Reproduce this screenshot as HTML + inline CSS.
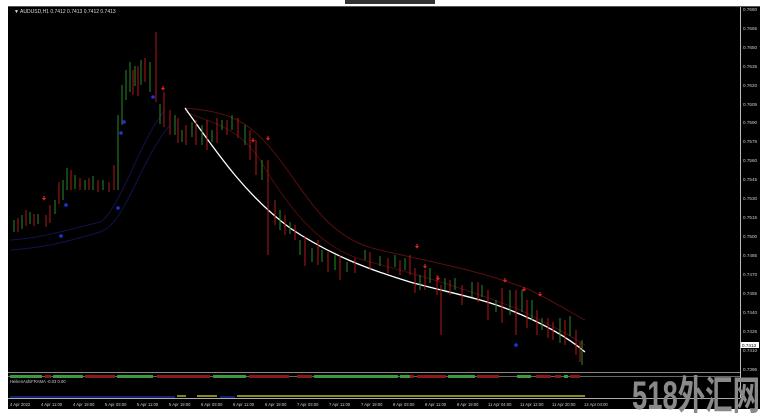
<!DOCTYPE html>
<html><head><meta charset="utf-8"><style>
html,body{margin:0;padding:0;background:#fff;width:766px;height:415px;overflow:hidden}
svg{display:block}
text{font-family:"Liberation Sans",sans-serif}
</style></head><body>
<svg width="766" height="415" xmlns="http://www.w3.org/2000/svg">
<defs><path id="ar" d="M-0.6 -3h1.2v2h1.6l-2.2 2.6l-2.2 -2.6h1.6z" fill="#e02020"/></defs>
<rect x="0" y="0" width="766" height="415" fill="#fff"/>
<rect x="345" y="0" width="90" height="4" fill="#333"/>
<rect x="8" y="6" width="752" height="403" fill="#000"/>
<line x1="8" y1="6.5" x2="760" y2="6.5" stroke="#555"/>
<line x1="740.5" y1="7" x2="740.5" y2="398" stroke="#bbb"/>
<line x1="8" y1="372.5" x2="740" y2="372.5" stroke="#888"/>
<line x1="8" y1="398.5" x2="740" y2="398.5" stroke="#aaa"/>
<text x="14" y="13" font-size="5" fill="#ddd">▼ AUDUSD,H1  0.7412 0.7413 0.7412 0.7413</text>
<g font-size="4.6" fill="#ccc">
<text x="743" y="11">0.7680</text><text x="743" y="30">0.7665</text><text x="743" y="49">0.7650</text><text x="743" y="68">0.7635</text><text x="743" y="87">0.7620</text><text x="743" y="106">0.7605</text><text x="743" y="124">0.7590</text><text x="743" y="143">0.7575</text><text x="743" y="162">0.7560</text><text x="743" y="181">0.7545</text><text x="743" y="200">0.7530</text><text x="743" y="219">0.7515</text><text x="743" y="238">0.7500</text><text x="743" y="257">0.7485</text><text x="743" y="276">0.7470</text><text x="743" y="295">0.7455</text><text x="743" y="314">0.7440</text><text x="743" y="333">0.7425</text><text x="743" y="352">0.7410</text><text x="743" y="371">0.7396</text>
</g>
<rect x="741" y="342" width="18" height="6" fill="#fff"/><text x="742" y="347" font-size="4.6" fill="#000">0.7413</text>
<g fill="none" stroke-width="1">
<path d="M10 240 C40 238 60 232 100 222 C120 210 140 140 165 110" stroke="#12124a"/>
<path d="M10 250 C40 248 60 244 100 232 C125 225 140 160 170 125" stroke="#12124a"/>
<path d="M185 108 C230 112 250 120 280 160 C310 200 330 240 380 250 C430 262 480 270 530 290 C560 305 575 315 585 320" stroke="#5a0e0e"/>
<path d="M185 112 C220 125 240 130 260 160 C290 210 320 250 370 262 C420 275 470 290 520 310 C550 325 570 335 585 345" stroke="#4a0c0c"/>
<path d="M185 108 C215 150 245 195 290 228 C330 255 370 270 410 282 C450 293 480 298 510 310 C540 322 565 335 585 352" stroke="#fff" stroke-width="1.3"/>
</g>
<g stroke-width="1">
<g stroke="#2a8a2a">
<path d="M14 220v12M22 215v14M30 212v12M38 214v10M55 200v14M63 180v20M67 168v22M75 175v14M85 180v10M93 176v14M103 180v10M118 115v75M122 85v40M126 70v30M130 62v30M135 66v20M141 60v25M150 62v30M160 104v20M175 115v20M182 130v12M192 122v15M202 125v20M212 130v12M222 120v10M232 115v15M245 125v20M262 160v20M280 210v20M290 222v12M300 240v15M312 248v14M322 250v12M335 255v15M347 262v10M365 250v10M380 256v10M395 255v12M405 258v12M420 275v15M430 268v15M445 278v12M455 278v12M472 282v15M482 285v12M496 300v12M510 290v25M522 290v22M532 300v20M542 318v12M560 318v25M570 316v20M582 340v25"/>
</g>
<g stroke="#b01818">
<path d="M18 218v14M26 210v16M34 214v12M46 215v12M50 205v18M59 182v22M71 170v20M80 178v12M89 178v12M98 180v12M109 182v10M114 165v25M133 70v25M138 66v30M145 58v24M156 32v70M164 92v35M170 110v25M178 118v25M186 125v20M196 120v25M207 120v30M217 118v25M227 120v15M238 118v20M250 130v30M256 140v35M268 160v95M275 200v25M285 215v20M295 225v15M305 236v30M318 240v25M328 252v20M340 255v25M355 258v15M370 252v18M388 258v15M400 260v15M410 255v20M415 268v25M425 270v20M437 275v20M441 285v50M450 280v15M462 285v20M478 282v20M488 290v30M502 288v35M516 290v45M527 300v28M537 310v25M548 318v20M553 322v18M565 320v25M576 330v25M580 342v20"/>
</g>
</g>
<use href="#ar" x="44" y="199"/><use href="#ar" x="163" y="89"/><use href="#ar" x="253" y="141"/><use href="#ar" x="268" y="139"/><use href="#ar" x="417" y="247"/><use href="#ar" x="425" y="267"/><use href="#ar" x="438" y="279"/><use href="#ar" x="505" y="281"/><use href="#ar" x="524" y="290"/><use href="#ar" x="540" y="295"/>
<g fill="#2233dd">
<circle cx="61" cy="236" r="1.8"/><circle cx="66" cy="205" r="1.8"/><circle cx="118" cy="208" r="1.8"/><circle cx="121" cy="133" r="1.8"/><circle cx="124" cy="122" r="1.8"/><circle cx="153" cy="97" r="1.8"/><circle cx="516" cy="345" r="1.8"/>
</g>
<line x1="8" y1="376.5" x2="740" y2="376.5" stroke="#666"/>
<g fill="#3a9a3a"><rect x="10" y="375" width="32" height="3"/><rect x="53" y="375" width="30" height="3"/><rect x="117" y="375" width="36" height="3"/><rect x="213" y="375" width="33" height="3"/><rect x="314" y="375" width="84" height="3"/><rect x="400" y="375" width="12" height="3"/><rect x="448" y="375" width="27" height="3"/><rect x="517" y="375" width="14" height="3"/><rect x="564" y="375" width="4" height="3"/></g>
<g fill="#8a1a1a"><rect x="45" y="375" width="6" height="3"/><rect x="85" y="375" width="30" height="3"/><rect x="157" y="375" width="53" height="3"/><rect x="249" y="375" width="40" height="3"/><rect x="297" y="375" width="15" height="3"/><rect x="410" y="375" width="4" height="3"/><rect x="417" y="375" width="29" height="3"/><rect x="477" y="375" width="22" height="3"/><rect x="536" y="375" width="15" height="3"/><rect x="555" y="375" width="6" height="3"/><rect x="570" y="375" width="10" height="3"/></g>
<text x="10" y="383" font-size="4.2" fill="#ccc">HeikenAshiFRAMA -0.03 0.00</text>
<line x1="10" y1="397" x2="175" y2="397" stroke="#2233bb" stroke-width="1.2"/>
<line x1="177" y1="396" x2="186" y2="396" stroke="#dddd33" stroke-width="1.2"/>
<line x1="197" y1="396" x2="217" y2="396" stroke="#dddd33" stroke-width="1.2"/>
<line x1="220" y1="397" x2="235" y2="397" stroke="#2233bb" stroke-width="1.2"/>
<line x1="237" y1="396" x2="585" y2="396" stroke="#dddd33" stroke-width="1.2"/>
<g font-size="4.2" fill="#ccc">
<text x="10" y="406">4 Apr 2022</text><text x="41" y="406">4 Apr 11:00</text><text x="73" y="406">4 Apr 19:00</text><text x="105" y="406">5 Apr 03:00</text><text x="137" y="406">5 Apr 11:00</text><text x="169" y="406">5 Apr 19:00</text><text x="201" y="406">6 Apr 03:00</text><text x="233" y="406">6 Apr 11:00</text><text x="265" y="406">6 Apr 19:00</text><text x="297" y="406">7 Apr 03:00</text><text x="329" y="406">7 Apr 11:00</text><text x="361" y="406">7 Apr 19:00</text><text x="393" y="406">8 Apr 03:00</text><text x="425" y="406">8 Apr 11:00</text><text x="457" y="406">8 Apr 19:00</text><text x="488" y="406">11 Apr 04:00</text><text x="520" y="406">11 Apr 12:00</text><text x="552" y="406">11 Apr 20:00</text><text x="584" y="406">12 Apr 04:00</text>
</g>
<text x="632" y="409" font-size="40" font-weight="bold" fill="#8a8a8a" style='font-family:"Liberation Sans","Noto Sans CJK SC",sans-serif' textLength="128" lengthAdjust="spacingAndGlyphs">518外汇网</text>
</svg>
</body></html>
